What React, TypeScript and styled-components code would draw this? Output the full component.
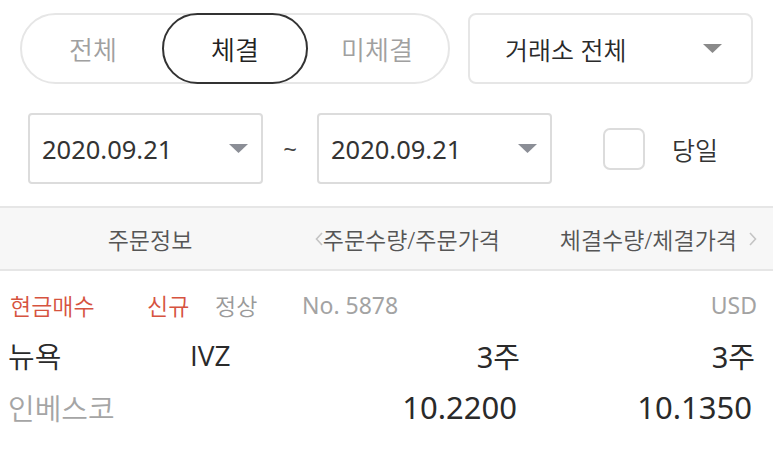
import React from 'react';
import styled, {createGlobalStyle} from 'styled-components';

const GlobalStyle = createGlobalStyle`
  body {
    margin: 0;
    background: #fff;
    font-family: "Noto Sans", "Noto Sans CJK KR", sans-serif;
    color: #333;
  }
`;

const Caret = ({color = '#8a8a8a'}: {color?: string}) => (
  <svg width="19" height="9" viewBox="0 0 19 9">
    <polygon points="0,0 19,0 9.5,9" fill={color} />
  </svg>
);

const Chevron = ({dir}: {dir: 'left' | 'right'}) => (
  <svg width="8" height="16" viewBox="0 0 8 16">
    <polyline
      points={dir === 'left' ? '7,2 1.5,8 7,14' : '1,2 6.5,8 1,14'}
      fill="none"
      stroke="#c4c4c4"
      strokeWidth="1.6"
    />
  </svg>
);

export default function App() {
  return (
    <Styled.Page>
      <GlobalStyle />
      <Styled.TopBar>
        <Styled.Segmented>
          <Styled.Segment>전체</Styled.Segment>
          <Styled.Segment $active>체결</Styled.Segment>
          <Styled.Segment>미체결</Styled.Segment>
        </Styled.Segmented>
        <Styled.Select>
          <span>거래소 전체</span>
          <Caret />
        </Styled.Select>
      </Styled.TopBar>

      <Styled.DateRow>
        <Styled.DateBox>
          <span>2020.09.21</span>
          <Caret color="#8b8e96" />
        </Styled.DateBox>
        <Styled.Tilde>~</Styled.Tilde>
        <Styled.DateBox>
          <span>2020.09.21</span>
          <Caret color="#8b8e96" />
        </Styled.DateBox>
        <Styled.Checkbox />
        <Styled.CheckLabel>당일</Styled.CheckLabel>
      </Styled.DateRow>

      <Styled.Header>
        <Styled.HeadCell $align="center">주문정보</Styled.HeadCell>
        <Styled.HeadCell $align="flex-end" $pad={20}>
          <Chevron dir="left" />
          주문수량/주문가격
        </Styled.HeadCell>
        <Styled.HeadCell $align="flex-end" $pad={16}>
          체결수량/체결가격
          <Styled.After>
            <Chevron dir="right" />
          </Styled.After>
        </Styled.HeadCell>
      </Styled.Header>

      <Styled.InfoRow>
        <Styled.Tag $color="#d6533f">현금매수</Styled.Tag>
        <Styled.Tag $color="#d6533f">신규</Styled.Tag>
        <Styled.Tag $color="#9a9a9a">정상</Styled.Tag>
        <Styled.Code>No. 5878</Styled.Code>
        <Styled.Code>USD</Styled.Code>
      </Styled.InfoRow>

      <Styled.DataRow>
        <Styled.Cell>뉴욕</Styled.Cell>
        <Styled.Ticker>IVZ</Styled.Ticker>
        <Styled.Num>3주</Styled.Num>
        <Styled.Num>3주</Styled.Num>
      </Styled.DataRow>
      <Styled.DataRow>
        <Styled.Cell $muted $span>
          인베스코
        </Styled.Cell>
        <Styled.Num $big>10.2200</Styled.Num>
        <Styled.Num $big>10.1350</Styled.Num>
      </Styled.DataRow>
    </Styled.Page>
  );
}

const Styled = {
  Page: styled.div`
    width: 773px;
    height: 460px;
    overflow: hidden;
  `,
  TopBar: styled.div`
    display: flex;
    gap: 18px;
    padding: 13px 20px 0 20px;
  `,
  Segmented: styled.div`
    box-sizing: border-box;
    width: 430px;
    height: 71px;
    border: 2px solid #e6e6e6;
    border-radius: 36px;
    display: grid;
    grid-template-columns: repeat(3, 1fr);
  `,
  Segment: styled.div<{$active?: boolean}>`
    margin: -2px;
    border: 2.5px solid ${p => (p.$active ? '#333' : 'transparent')};
    border-radius: 36px;
    display: flex;
    align-items: center;
    justify-content: center;
    font-size: 26px;
    font-weight: 350;
    color: ${p => (p.$active ? '#222' : '#a0a0a0')};
  `,
  Select: styled.div`
    box-sizing: border-box;
    flex: 1;
    height: 71px;
    border: 2px solid #e6e6e6;
    border-radius: 8px;
    padding: 0 29px 0 35px;
    display: flex;
    align-items: center;
    justify-content: space-between;
    font-size: 25px;
    font-weight: 350;
    color: #2a2a2a;
  `,
  DateRow: styled.div`
    display: flex;
    align-items: center;
    margin-top: 29px;
    padding-left: 28px;
  `,
  DateBox: styled.div`
    box-sizing: border-box;
    width: 235px;
    height: 71px;
    border: 2px solid #dcdcdc;
    border-radius: 4px;
    padding: 0 13px 0 12px;
    display: flex;
    align-items: center;
    justify-content: space-between;
    font-size: 25.5px;
    color: #333;
  `,
  Tilde: styled.div`
    width: 54px;
    text-align: center;
    font-size: 24px;
    color: #444;
  `,
  Checkbox: styled.div`
    box-sizing: border-box;
    width: 42px;
    height: 42px;
    margin-left: 51px;
    border: 2.5px solid #dcdcdc;
    border-radius: 7px;
  `,
  CheckLabel: styled.div`
    margin-left: 27px;
    font-size: 25px;
    font-weight: 350;
    color: #333;
  `,
  Header: styled.div`
    box-sizing: border-box;
    margin-top: 22px;
    height: 65px;
    background: #f7f7f7;
    border-top: 2px solid #e6e6e6;
    border-bottom: 2px solid #e6e6e6;
    display: grid;
    grid-template-columns: 300px 220px 1fr;
  `,
  HeadCell: styled.div<{$align: string; $pad?: number}>`
    display: flex;
    align-items: center;
    justify-content: ${p => p.$align};
    padding-right: ${p => p.$pad ?? 0}px;
    font-size: 23px;
    font-weight: 350;
    color: #555;
    white-space: nowrap;
  `,
  After: styled.span`
    display: flex;
    margin-left: 12px;
  `,
  InfoRow: styled.div`
    box-sizing: border-box;
    height: 58px;
    padding: 10px 16px 0 10px;
    display: grid;
    grid-template-columns: 137px 68px 87px 1fr auto;
    align-items: center;
  `,
  Tag: styled.div<{$color: string}>`
    font-size: 23px;
    font-weight: 350;
    color: ${p => p.$color};
    white-space: nowrap;
  `,
  Code: styled.div`
    font-size: 23px;
    color: #a3a3a3;
    white-space: nowrap;
  `,
  DataRow: styled.div`
    height: 52px;
    padding: 0 18px 0 8px;
    display: grid;
    grid-template-columns: 182px 110px 220px 235px;
    align-items: center;
  `,
  Cell: styled.div<{$muted?: boolean; $span?: boolean}>`
    font-size: 29px;
    font-weight: 350;
    color: ${p => (p.$muted ? '#a5a5a5' : '#2a2a2a')};
    grid-column: ${p => (p.$span ? 'span 2' : 'auto')};
    white-space: nowrap;
  `,
  Ticker: styled.div`
    font-family: "Open Sans", sans-serif;
    font-size: 28px;
    color: #2a2a2a;
    white-space: nowrap;
  `,
  Num: styled.div<{$big?: boolean}>`
    font-size: ${p => (p.$big ? 31 : 29)}px;
    color: #2a2a2a;
    text-align: right;
    padding-right: ${p => (p.$big ? 3 : 0)}px;
    white-space: nowrap;
  `,
};
